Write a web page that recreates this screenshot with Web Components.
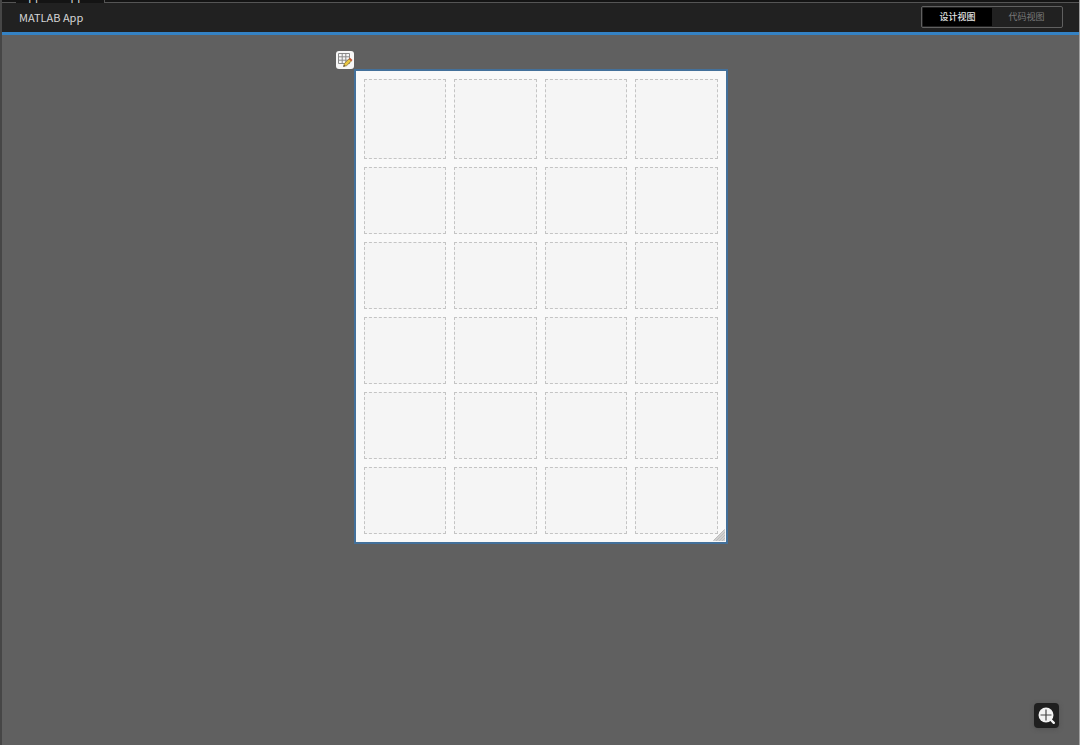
<!DOCTYPE html>
<html lang="zh-CN">
<head>
<meta charset="utf-8">
<title>MATLAB App</title>
<style>
html, body { height: 100%; }
body {
  margin: 0;
  background: #606060;
  color: #d6d6d6;
  font-family: "Noto Sans CJK SC", "Noto Sans", sans-serif;
}
</style>
</head>
<body>
<app-designer></app-designer>
<script>
class BaseElement extends HTMLElement {
  constructor() {
    super();
    this.attachShadow({ mode: "open" }).innerHTML = this.constructor.markup;
  }
}

class TabStrip extends BaseElement {
  static markup = `
    <style>
      :host { display: flex; align-items: flex-end; height: 3px; overflow: hidden; background: #141414; }
      .lead { width: 14px; height: 1px; background: #555; }
      .tab { box-sizing: border-box; width: 89px; height: 24px; padding: 8px 6px 0; background: #141414;
             border-right: 1px solid #555; font-size: 11px; line-height: 16px; white-space: nowrap; }
      .rest { flex: 1; height: 1px; background: #555; }
    </style>
    <div class="lead"></div><div class="tab"><slot></slot></div><div class="rest"></div>`;
}
customElements.define("tab-strip", TabStrip);

class ViewSwitch extends BaseElement {
  static markup = `
    <style>
      :host { display: flex; box-sizing: border-box; width: 142px; height: 22px; padding: 1px;
              border: 1px solid #606060; border-radius: 2px; background: #212121; }
      button { flex: 1; margin: 0; padding: 0; border: 0; background: transparent; color: #7a7a7a;
               font: 9px/16px "Noto Sans CJK SC", "Noto Sans", sans-serif; }
      button[aria-pressed="true"] { background: #000; color: #e4e4e4; font-weight: 500; }
    </style>
    <button type="button" aria-pressed="true">设计视图</button>
    <button type="button" aria-pressed="false">代码视图</button>`;
  connectedCallback() {
    const buttons = [...this.shadowRoot.querySelectorAll("button")];
    buttons.forEach(b => b.addEventListener("click", () =>
      buttons.forEach(o => o.setAttribute("aria-pressed", String(o === b)))));
  }
}
customElements.define("view-switch", ViewSwitch);

class TitleBar extends BaseElement {
  static markup = `
    <style>
      :host { display: flex; align-items: center; justify-content: space-between; box-sizing: border-box;
              height: 32px; padding: 0 16px 2px 17px; background: #212121; border-bottom: 3px solid #3482c4; }
      .title { font-size: 11px; line-height: 16px; }
    </style>
    <span class="title"><slot></slot></span>
    <view-switch></view-switch>`;
}
customElements.define("title-bar", TitleBar);

class GridCanvas extends BaseElement {
  static markup = `
    <style>
      :host { display: block; position: relative; box-sizing: border-box; width: 374px; border: 2px solid #43709a;
              background: #f9f9f9; }
      .grid { display: grid; grid-template-columns: repeat(4, 1fr); grid-template-rows: 80px repeat(5, 67px);
              gap: 8px; padding: 8px; }
      .cell { border: 1px dashed #c4c4c4; background: #f5f5f5; }
      .edit { position: absolute; left: -20px; top: -20px; width: 18px; height: 18px; padding: 0; border: 0;
              border-radius: 3px; background: #f7f7f7; }
      .edit svg, .grip { display: block; }
      .grip { position: absolute; right: 1px; bottom: 1px; }
    </style>
    <div class="grid"></div>
    <button class="edit" type="button" aria-label="编辑网格">
      <svg width="18" height="18" viewBox="0 0 18 18" fill="none">
        <path d="M2.5 2.5h11v10h-11zM6.2 2.5v10M9.8 2.5v10M2.5 5.8h11M2.5 9.2h11" stroke="#8a8a8a" stroke-width="1"/>
        <path d="M7.5 15.5l1-3.2 4.6-4.5 2.3 2.2-4.7 4.6z" fill="#e8c640" stroke="#8a733c" stroke-width=".8"/>
        <path d="M12.8 7.9l1.2-1.1 2.5 2.3-1.2 1.2z" fill="#c95834"/>
        <path d="M7.5 15.5l.5-1.6 1.1 1.1z" fill="#333"/>
      </svg>
    </button>
    <svg class="grip" width="12" height="12" viewBox="0 0 12 12" aria-hidden="true">
      <path d="M12 0v12H0z" fill="#d0d0d0"/>
      <path d="M3 12L12 3M6 12l6-6M9 12l3-3M.5 11.5l11-11" stroke="#bdbdbd" stroke-width="1"/>
    </svg>`;
  connectedCallback() {
    const grid = this.shadowRoot.querySelector(".grid");
    if (grid.childElementCount) return;
    for (let i = 0; i < 24; i++) {
      const cell = document.createElement("div");
      cell.className = "cell";
      grid.append(cell);
    }
  }
}
customElements.define("grid-canvas", GridCanvas);

class ZoomButton extends BaseElement {
  static markup = `
    <style>
      :host { display: block; }
      button { display: block; width: 25px; height: 25px; padding: 0; border: 0; border-radius: 4px;
               background: #1f1f1f; box-shadow: 0 1px 4px #4448; }
      svg { display: block; }
    </style>
    <button type="button" aria-label="放大">
      <svg width="25" height="25" viewBox="0 0 25 25" fill="none">
        <circle cx="12" cy="12" r="7.5" fill="#f2f2f2"/>
        <path d="M17 17l2.8 2.8" stroke="#f2f2f2" stroke-width="2.4" stroke-linecap="round"/>
        <path d="M12 6.5v11M6.5 12h11" stroke="#444" stroke-width="1.2"/>
      </svg>
    </button>`;
}
customElements.define("zoom-button", ZoomButton);

class AppDesigner extends BaseElement {
  static markup = `
    <style>
      :host { display: flex; flex-direction: column; box-sizing: border-box; min-height: 100vh; position: relative;
              border-left: 2px solid #464646; border-right: 1px solid #a0a0a0; }
      main { flex: 1; display: flex; justify-content: center; align-items: flex-start; padding: 34px 0; }
      zoom-button { position: absolute; right: 20px; bottom: 17px; }
    </style>
    <tab-strip>app1.mlapp</tab-strip>
    <title-bar>MATLAB App</title-bar>
    <main><grid-canvas></grid-canvas></main>
    <zoom-button></zoom-button>`;
}
customElements.define("app-designer", AppDesigner);
</script>
</body>
</html>
